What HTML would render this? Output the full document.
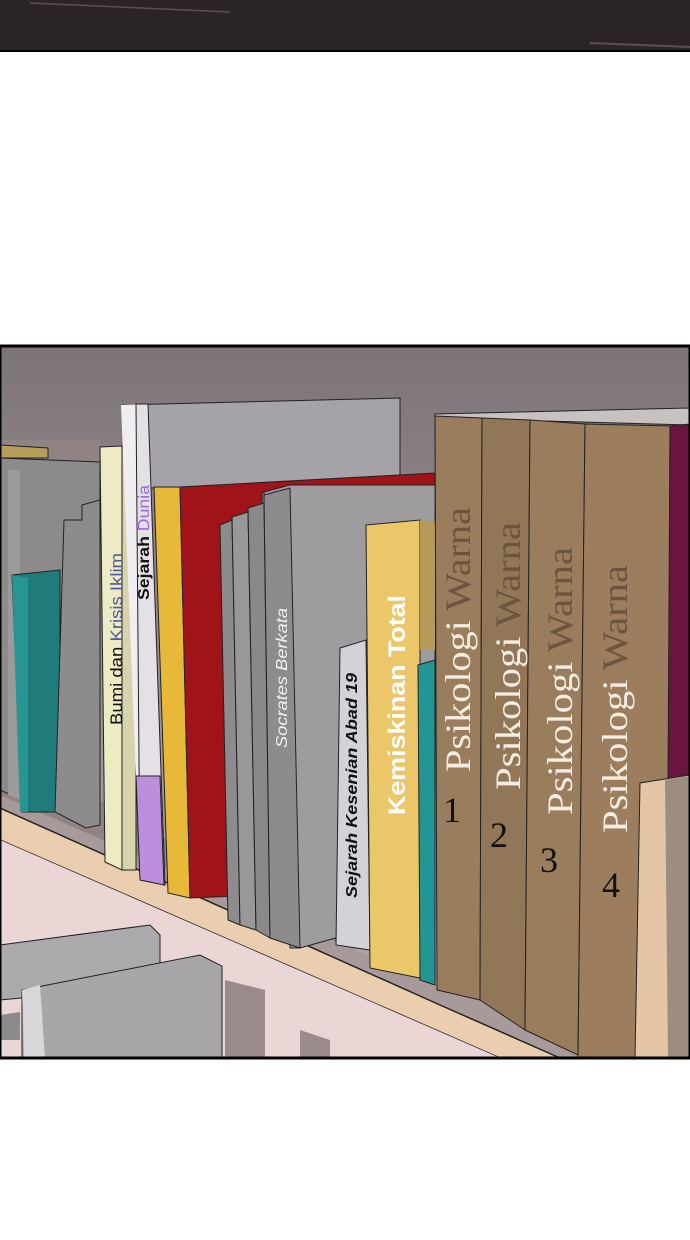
<!DOCTYPE html>
<html><head><meta charset="utf-8"><style>
html,body{margin:0;padding:0;background:#fff;width:690px;height:1240px;overflow:hidden}
svg{display:block}
text{font-family:"Liberation Sans",sans-serif}
.s{font-family:"Liberation Serif",serif}
</style></head><body>
<svg width="690" height="1240" viewBox="0 0 690 1240" xmlns="http://www.w3.org/2000/svg">
<defs>
<linearGradient id="bg" x1="0" y1="0" x2="0" y2="1">
<stop offset="0" stop-color="#7d7479"/><stop offset="0.5" stop-color="#9d9196"/><stop offset="1" stop-color="#b9a9ac"/>
</linearGradient>
</defs>
<rect x="0" y="0" width="690" height="52" fill="#2b2425"/>
<line x1="0" y1="51" x2="690" y2="51" stroke="#000" stroke-width="2"/>
<line x1="30" y1="3" x2="230" y2="12" stroke="#5a5050" stroke-width="1.5"/>
<line x1="590" y1="43" x2="690" y2="47" stroke="#5a5050" stroke-width="2"/>
<rect x="0" y="346" width="690" height="712" fill="url(#bg)"/>
<polygon points="0,440 100,440 100,800 440,1000 0,800" fill="#8f8384"/>
<polygon points="0,795 435,985 690,1058 0,1058" fill="#a89a9a"/>
<polygon points="0,808 440,1005 560,1058 500,1058 0,840" fill="#ebcdb0" stroke="#222" stroke-width="1.5"/>
<polygon points="0,840 500,1058 0,1058" fill="#ebd6d6"/>
<polygon points="225,980 265,990 265,1058 225,1058" fill="#9a8a8c"/>
<polygon points="300,1030 330,1040 330,1058 300,1058" fill="#9a8a8c"/>
<polygon points="0,445 48,448 48,458 0,458" fill="#b79f59" stroke="#222"/>
<polygon points="0,458 100,462 100,800 22,800 0,790" fill="#8d8a8c" stroke="#222"/>
<polygon points="8,470 20,470 20,800 8,795" fill="#9c999b"/>
<polygon points="12,575 60,570 60,812 22,812" fill="#1f7c7a" stroke="#222"/>
<polygon points="12,575 28,578 28,812 20,812" fill="#279592"/>
<polygon points="64,520 82,520 82,505 100,500 100,825 86,828 55,812" fill="#8e8b8d" stroke="#222"/>
<polygon points="100,447 122,446 122,870 105,862" fill="#eeeac4" stroke="#222"/>
<polygon points="122,446 136,449 136,870 122,870" fill="#d8d3ac" stroke="#222"/>
<polygon points="122,405 400,398 400,480 150,488" fill="#a5a2a8" stroke="#222"/>
<polygon points="121,405 146,404 146,776 136,776" fill="#f1eef2"/>
<polygon points="136,404 148,404 165,885 140,880" fill="#e4e0e6" stroke="#222"/>
<polygon points="136,776 160,776 164,885 140,880" fill="#bb8fde" stroke="#222"/>
<polygon points="154,487 180,487 190,898 168,893" fill="#e8b838" stroke="#222"/>
<polygon points="180,487 435,473 435,500 262,492 262,895 190,898" fill="#a01419" stroke="#222"/>
<polygon points="220,525 232,520 240,925 228,920" fill="#8e8b8e" stroke="#222"/>
<polygon points="232,517 248,512 256,930 240,925" fill="#9a979a" stroke="#222"/>
<polygon points="248,508 264,503 270,938 256,930" fill="#8b888b" stroke="#222"/>
<polygon points="264,492 290,485 435,485 435,910 300,948 290,948" fill="#9f9ca0" stroke="#222"/>
<polygon points="264,495 290,488 300,948 270,938" fill="#8e8b8f" stroke="#222"/>
<polygon points="340,648 366,640 370,950 336,945" fill="#d3d2d7" stroke="#222"/>
<polygon points="366,525 420,520 420,978 370,968" fill="#ecc76a" stroke="#222"/>
<polygon points="420,520 435,522 435,650 420,650" fill="#b59a5a"/>
<polygon points="418,665 435,660 435,985 420,980" fill="#229595" stroke="#222"/>
<polygon points="435,414 690,408 690,425 435,418" fill="#c7c1c0" stroke="#222"/>
<polygon points="435,416 482,418 480,1000 437,990" fill="#9a7d5d" stroke="#222"/>
<polygon points="482,418 530,420 525,1030 480,1000" fill="#927658" stroke="#222"/>
<polygon points="530,420 585,424 578,1055 525,1030" fill="#9a7d5d" stroke="#222"/>
<polygon points="585,424 670,426 668,1058 578,1058" fill="#9c7e5f" stroke="#222"/>
<polygon points="670,426 690,424 690,780 668,782" fill="#6b1440" stroke="#222"/>
<polygon points="640,783 690,775 690,1058 635,1058" fill="#e4c6a6" stroke="#222"/>
<polygon points="665,780 690,776 690,1058 668,1058" fill="#9d8d80"/>
<polygon points="0,945 150,925 160,935 160,985 0,1000" fill="#adaaad" stroke="#222"/>
<polygon points="0,1015 20,1012 20,1040 0,1040" fill="#8d8a8d"/>
<polygon points="22,990 200,955 222,966 222,1058 22,1058" fill="#a9a6a9" stroke="#222"/>
<polygon points="22,990 40,985 45,1058 24,1058" fill="#d9d7da"/>
<g>
<text transform="translate(122,725) rotate(-90)" fill="#111" font-size="17" textLength="172" lengthAdjust="spacingAndGlyphs">Bumi dan <tspan fill="#4a5aa0">Krisis Iklim</tspan></text>
<text transform="translate(149,600) rotate(-90)" fill="#111" font-weight="bold" font-size="16" textLength="115" lengthAdjust="spacingAndGlyphs">Sejarah <tspan fill="#9a6bd0" font-weight="normal">Dunia</tspan></text>
<text transform="translate(287,748) rotate(-90)" fill="#f2f2f2" font-style="italic" font-size="16" textLength="140" lengthAdjust="spacingAndGlyphs">Socrates Berkata</text>
<text transform="translate(357,898) rotate(-90)" fill="#111" font-style="italic" font-weight="bold" font-size="16" textLength="225" lengthAdjust="spacingAndGlyphs">Sejarah Kesenian Abad 19</text>
<text transform="translate(405,815) rotate(-90)" fill="#fff" font-weight="bold" font-size="24" textLength="220" lengthAdjust="spacingAndGlyphs">Kemiskinan Total</text>
</g>
<g font-size="36">
<text class="s" transform="translate(470,772) rotate(-90)" fill="#f3ede3" textLength="265" lengthAdjust="spacingAndGlyphs">Psikologi <tspan fill="#6b5540">Warna</tspan></text>
<text class="s" transform="translate(520,790) rotate(-90)" fill="#f3ede3" textLength="268" lengthAdjust="spacingAndGlyphs">Psikologi <tspan fill="#6b5540">Warna</tspan></text>
<text class="s" transform="translate(572,815) rotate(-90)" fill="#f3ede3" textLength="268" lengthAdjust="spacingAndGlyphs">Psikologi <tspan fill="#6b5540">Warna</tspan></text>
<text class="s" transform="translate(627,833) rotate(-90)" fill="#f3ede3" textLength="268" lengthAdjust="spacingAndGlyphs">Psikologi <tspan fill="#6b5540">Warna</tspan></text>
<text class="s" x="443" y="822" fill="#111">1</text>
<text class="s" x="490" y="847" fill="#111">2</text>
<text class="s" x="540" y="872" fill="#111">3</text>
<text class="s" x="602" y="897" fill="#111">4</text>
</g>
<rect x="0" y="346" width="690" height="712" fill="none" stroke="#000" stroke-width="3"/>
</svg>
</body></html>
